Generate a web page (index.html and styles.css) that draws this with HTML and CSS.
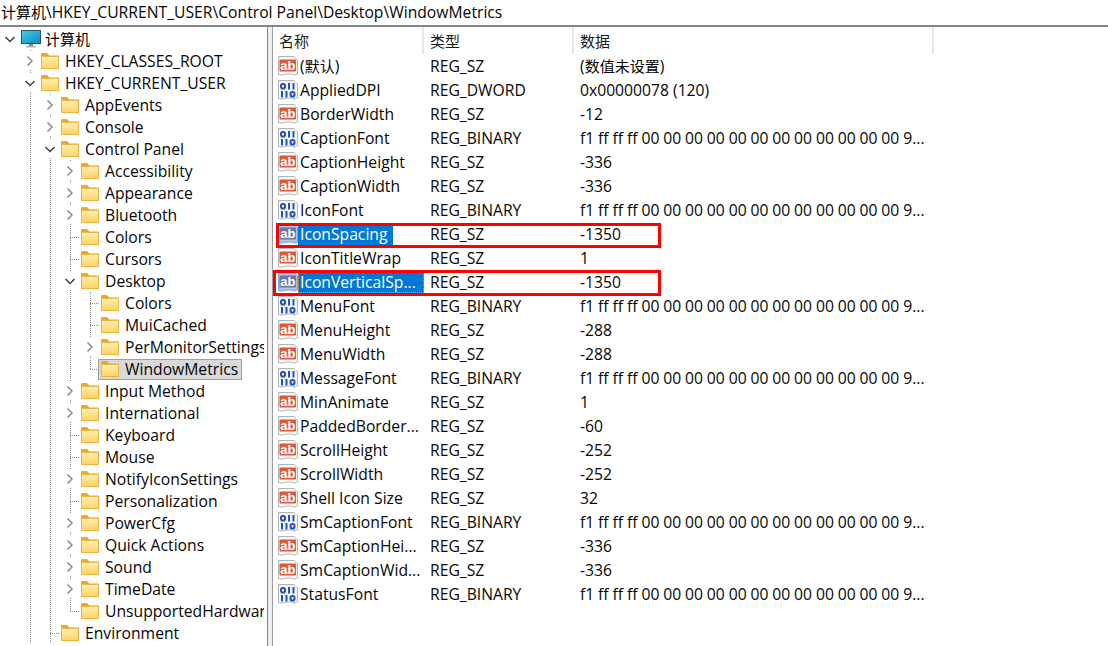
FILE: index.html
```html
<!DOCTYPE html>
<html lang="zh-CN">
<head>
<meta charset="utf-8">
<title>注册表编辑器</title>
<link rel="stylesheet" href="styles.css">
</head>
<body>
<svg class="defs" width="0" height="0" aria-hidden="true">
  <defs>
    <linearGradient id="fold" x1="0" y1="0" x2="0" y2="1">
      <stop offset="0" stop-color="#fff3bf"/><stop offset=".35" stop-color="#ffe594"/><stop offset="1" stop-color="#fbd36a"/>
    </linearGradient>
    <linearGradient id="screen" x1="0" y1="0" x2="1" y2="1">
      <stop offset="0" stop-color="#45cfe3"/><stop offset="1" stop-color="#0f86c4"/>
    </linearGradient>
  </defs>
  <symbol id="i-open" viewBox="0 0 20 18"><path d="M5.500 7 10 11.500 14.500 7" fill="none" stroke="#3f3f3f" stroke-width="1.500"/></symbol>
  <symbol id="i-closed" viewBox="0 0 20 18"><path d="M7.500 4.500 12 9 7.500 13.500" fill="none" stroke="#8c8c8c" stroke-width="1.500"/></symbol>
  <symbol id="i-folder" viewBox="0 0 18 16">
    <path d="M0 1q0-1 1-1h5l2.500 2.500H18v3H0z" fill="#f0a91f"/>
    <rect x=".5" y="3.500" width="17" height="12" fill="url(#fold)" stroke="#edb53f"/>
  </symbol>
  <symbol id="i-pc" viewBox="0 0 20 18">
    <rect x=".5" y=".5" width="19" height="13" fill="url(#screen)" stroke="#25566f"/>
    <path d="M8 14h4v2H8z" fill="#7d8b94"/>
    <path d="M5 16h10v1.500H5z" fill="#a9b3b9"/>
  </symbol>
  <symbol id="i-sz" viewBox="0 0 20 20">
    <path d="M.5.5H16l3.500 3.500V18q-2.500 1.500-5 .5t-5-.500-5 1-4-.5z" fill="var(--pg,#f6f7f8)" stroke="var(--pe,#b1b5ba)"/>
    <rect x="1.500" y="3.500" width="16.500" height="12" rx="1" fill="var(--ab,#e2583c)"/>
    <text class="ab" x="9.800" y="14" text-anchor="middle">ab</text>
  </symbol>
  <symbol id="i-bin" viewBox="0 0 20 20">
    <path d="M.5.5H16l3.500 3.500V18q-2.500 1.500-5 .5t-5-.500-5 1-4-.5z" fill="#f6f7f8" stroke="#b1b5ba"/>
    <g fill="none" stroke="#2450c4" stroke-width="2">
      <rect x="3" y="4" width="4" height="4.500" rx="1.800"/><path d="M11 3v6.500M15.500 3v6.500"/>
      <path d="M4 11v6.500M8.500 11v6.500"/><rect x="12.500" y="12" width="4" height="4.500" rx="1.800"/>
    </g>
  </symbol>
</svg>

<div class="pathbar"><span class="cjk">计算机</span>\HKEY_CURRENT_USER\Control Panel\Desktop\WindowMetrics</div>

<main class="panes">
  <nav class="tree">
    <div class="node"><span class="cell"><svg class="tw"><use href="#i-open"/></svg></span><svg class="pc"><use href="#i-pc"/></svg><span class="label cjk">计算机</span></div>
    <div class="node"><span class="cell"></span><span class="cell line"><svg class="tw"><use href="#i-closed"/></svg></span><svg class="fd"><use href="#i-folder"/></svg><span class="label">HKEY_CLASSES_ROOT</span></div>
    <div class="node"><span class="cell"></span><span class="cell line"><svg class="tw"><use href="#i-open"/></svg></span><svg class="fd"><use href="#i-folder"/></svg><span class="label">HKEY_CURRENT_USER</span></div>

    <div class="node"><span class="cell"></span><span class="cell line"></span><span class="cell line"><svg class="tw"><use href="#i-closed"/></svg></span><svg class="fd"><use href="#i-folder"/></svg><span class="label">AppEvents</span></div>
    <div class="node"><span class="cell"></span><span class="cell line"></span><span class="cell line"><svg class="tw"><use href="#i-closed"/></svg></span><svg class="fd"><use href="#i-folder"/></svg><span class="label">Console</span></div>
    <div class="node"><span class="cell"></span><span class="cell line"></span><span class="cell line"><svg class="tw"><use href="#i-open"/></svg></span><svg class="fd"><use href="#i-folder"/></svg><span class="label">Control Panel</span></div>

    <div class="node"><span class="cell"></span><span class="cell line"></span><span class="cell line"></span><span class="cell line"><svg class="tw"><use href="#i-closed"/></svg></span><svg class="fd"><use href="#i-folder"/></svg><span class="label">Accessibility</span></div>
    <div class="node"><span class="cell"></span><span class="cell line"></span><span class="cell line"></span><span class="cell line"><svg class="tw"><use href="#i-closed"/></svg></span><svg class="fd"><use href="#i-folder"/></svg><span class="label">Appearance</span></div>
    <div class="node"><span class="cell"></span><span class="cell line"></span><span class="cell line"></span><span class="cell line"><svg class="tw"><use href="#i-closed"/></svg></span><svg class="fd"><use href="#i-folder"/></svg><span class="label">Bluetooth</span></div>
    <div class="node"><span class="cell"></span><span class="cell line"></span><span class="cell line"></span><span class="cell leaf"></span><svg class="fd"><use href="#i-folder"/></svg><span class="label">Colors</span></div>
    <div class="node"><span class="cell"></span><span class="cell line"></span><span class="cell line"></span><span class="cell leaf"></span><svg class="fd"><use href="#i-folder"/></svg><span class="label">Cursors</span></div>
    <div class="node"><span class="cell"></span><span class="cell line"></span><span class="cell line"></span><span class="cell line"><svg class="tw"><use href="#i-open"/></svg></span><svg class="fd"><use href="#i-folder"/></svg><span class="label">Desktop</span></div>

    <div class="node"><span class="cell"></span><span class="cell line"></span><span class="cell line"></span><span class="cell line"></span><span class="cell leaf"></span><svg class="fd"><use href="#i-folder"/></svg><span class="label">Colors</span></div>
    <div class="node"><span class="cell"></span><span class="cell line"></span><span class="cell line"></span><span class="cell line"></span><span class="cell leaf"></span><svg class="fd"><use href="#i-folder"/></svg><span class="label">MuiCached</span></div>
    <div class="node"><span class="cell"></span><span class="cell line"></span><span class="cell line"></span><span class="cell line"></span><span class="cell line"><svg class="tw"><use href="#i-closed"/></svg></span><svg class="fd"><use href="#i-folder"/></svg><span class="label">PerMonitorSettings</span></div>
    <div class="node"><span class="cell"></span><span class="cell line"></span><span class="cell line"></span><span class="cell line"></span><span class="cell last"></span><div class="current"><svg class="fd"><use href="#i-folder"/></svg><span class="label">WindowMetrics</span></div></div>

    <div class="node"><span class="cell"></span><span class="cell line"></span><span class="cell line"></span><span class="cell line"><svg class="tw"><use href="#i-closed"/></svg></span><svg class="fd"><use href="#i-folder"/></svg><span class="label">Input Method</span></div>
    <div class="node"><span class="cell"></span><span class="cell line"></span><span class="cell line"></span><span class="cell line"><svg class="tw"><use href="#i-closed"/></svg></span><svg class="fd"><use href="#i-folder"/></svg><span class="label">International</span></div>
    <div class="node"><span class="cell"></span><span class="cell line"></span><span class="cell line"></span><span class="cell leaf"></span><svg class="fd"><use href="#i-folder"/></svg><span class="label">Keyboard</span></div>
    <div class="node"><span class="cell"></span><span class="cell line"></span><span class="cell line"></span><span class="cell leaf"></span><svg class="fd"><use href="#i-folder"/></svg><span class="label">Mouse</span></div>
    <div class="node"><span class="cell"></span><span class="cell line"></span><span class="cell line"></span><span class="cell line"><svg class="tw"><use href="#i-closed"/></svg></span><svg class="fd"><use href="#i-folder"/></svg><span class="label">NotifyIconSettings</span></div>
    <div class="node"><span class="cell"></span><span class="cell line"></span><span class="cell line"></span><span class="cell leaf"></span><svg class="fd"><use href="#i-folder"/></svg><span class="label">Personalization</span></div>
    <div class="node"><span class="cell"></span><span class="cell line"></span><span class="cell line"></span><span class="cell line"><svg class="tw"><use href="#i-closed"/></svg></span><svg class="fd"><use href="#i-folder"/></svg><span class="label">PowerCfg</span></div>
    <div class="node"><span class="cell"></span><span class="cell line"></span><span class="cell line"></span><span class="cell line"><svg class="tw"><use href="#i-closed"/></svg></span><svg class="fd"><use href="#i-folder"/></svg><span class="label">Quick Actions</span></div>
    <div class="node"><span class="cell"></span><span class="cell line"></span><span class="cell line"></span><span class="cell line"><svg class="tw"><use href="#i-closed"/></svg></span><svg class="fd"><use href="#i-folder"/></svg><span class="label">Sound</span></div>
    <div class="node"><span class="cell"></span><span class="cell line"></span><span class="cell line"></span><span class="cell line"><svg class="tw"><use href="#i-closed"/></svg></span><svg class="fd"><use href="#i-folder"/></svg><span class="label">TimeDate</span></div>
    <div class="node"><span class="cell"></span><span class="cell line"></span><span class="cell line"></span><span class="cell last"></span><svg class="fd"><use href="#i-folder"/></svg><span class="label">UnsupportedHardware</span></div>
    <div class="node"><span class="cell"></span><span class="cell line"></span><span class="cell leaf"></span><svg class="fd"><use href="#i-folder"/></svg><span class="label">Environment</span></div>
  </nav>

  <div class="gutter"></div>

  <section class="values">
    <div class="heads">
      <div class="head name cjk">名称</div>
      <div class="head type cjk">类型</div>
      <div class="head data cjk">数据</div>
    </div>
    <div class="row"><svg class="ic"><use href="#i-sz"/></svg><span class="nm">(<span class="cjk">默认</span>)</span><span>REG_SZ</span><span>(<span class="cjk">数值未设置</span>)</span></div>
    <div class="row"><svg class="ic"><use href="#i-bin"/></svg><span class="nm">AppliedDPI</span><span>REG_DWORD</span><span>0x00000078 (120)</span></div>
    <div class="row"><svg class="ic"><use href="#i-sz"/></svg><span class="nm">BorderWidth</span><span>REG_SZ</span><span>-12</span></div>
    <div class="row"><svg class="ic"><use href="#i-bin"/></svg><span class="nm">CaptionFont</span><span>REG_BINARY</span><span class="hex">f1 ff ff ff 00 00 00 00 00 00 00 00 00 00 00 00 9...</span></div>
    <div class="row"><svg class="ic"><use href="#i-sz"/></svg><span class="nm">CaptionHeight</span><span>REG_SZ</span><span>-336</span></div>
    <div class="row"><svg class="ic"><use href="#i-sz"/></svg><span class="nm">CaptionWidth</span><span>REG_SZ</span><span>-336</span></div>
    <div class="row"><svg class="ic"><use href="#i-bin"/></svg><span class="nm">IconFont</span><span>REG_BINARY</span><span class="hex">f1 ff ff ff 00 00 00 00 00 00 00 00 00 00 00 00 9...</span></div>
    <div class="row picked"><svg class="ic"><use href="#i-sz"/></svg><span class="nm">IconSpacing</span><span>REG_SZ</span><span>-1350</span></div>
    <div class="row"><svg class="ic"><use href="#i-sz"/></svg><span class="nm">IconTitleWrap</span><span>REG_SZ</span><span>1</span></div>
    <div class="row picked focus"><svg class="ic"><use href="#i-sz"/></svg><span class="nm">IconVerticalSp...</span><span>REG_SZ</span><span>-1350</span></div>
    <div class="row"><svg class="ic"><use href="#i-bin"/></svg><span class="nm">MenuFont</span><span>REG_BINARY</span><span class="hex">f1 ff ff ff 00 00 00 00 00 00 00 00 00 00 00 00 9...</span></div>
    <div class="row"><svg class="ic"><use href="#i-sz"/></svg><span class="nm">MenuHeight</span><span>REG_SZ</span><span>-288</span></div>
    <div class="row"><svg class="ic"><use href="#i-sz"/></svg><span class="nm">MenuWidth</span><span>REG_SZ</span><span>-288</span></div>
    <div class="row"><svg class="ic"><use href="#i-bin"/></svg><span class="nm">MessageFont</span><span>REG_BINARY</span><span class="hex">f1 ff ff ff 00 00 00 00 00 00 00 00 00 00 00 00 9...</span></div>
    <div class="row"><svg class="ic"><use href="#i-sz"/></svg><span class="nm">MinAnimate</span><span>REG_SZ</span><span>1</span></div>
    <div class="row"><svg class="ic"><use href="#i-sz"/></svg><span class="nm">PaddedBorder...</span><span>REG_SZ</span><span>-60</span></div>
    <div class="row"><svg class="ic"><use href="#i-sz"/></svg><span class="nm">ScrollHeight</span><span>REG_SZ</span><span>-252</span></div>
    <div class="row"><svg class="ic"><use href="#i-sz"/></svg><span class="nm">ScrollWidth</span><span>REG_SZ</span><span>-252</span></div>
    <div class="row"><svg class="ic"><use href="#i-sz"/></svg><span class="nm">Shell Icon Size</span><span>REG_SZ</span><span>32</span></div>
    <div class="row"><svg class="ic"><use href="#i-bin"/></svg><span class="nm">SmCaptionFont</span><span>REG_BINARY</span><span class="hex">f1 ff ff ff 00 00 00 00 00 00 00 00 00 00 00 00 9...</span></div>
    <div class="row"><svg class="ic"><use href="#i-sz"/></svg><span class="nm">SmCaptionHei...</span><span>REG_SZ</span><span>-336</span></div>
    <div class="row"><svg class="ic"><use href="#i-sz"/></svg><span class="nm">SmCaptionWid...</span><span>REG_SZ</span><span>-336</span></div>
    <div class="row"><svg class="ic"><use href="#i-bin"/></svg><span class="nm">StatusFont</span><span>REG_BINARY</span><span class="hex">f1 ff ff ff 00 00 00 00 00 00 00 00 00 00 00 00 9...</span></div>
    <div class="mark mark-a"></div>
    <div class="mark mark-b"></div>
  </section>
</main>
</body>
</html>
```

FILE: styles.css
```css
* { box-sizing: border-box; }
html, body { margin: 0; height: 100%; overflow: hidden; background: #fff; }
body {
  font-family: "Open Sans", "Noto Sans CJK SC", sans-serif;
  font-size: 15.7px;
  line-height: 20px;
  color: #060606;
  display: flex;
  flex-direction: column;
}
.defs { position: absolute; }
.cjk { font-family: "Noto Sans CJK SC", sans-serif; font-size: 15px; }
.ab { font: bold 13px "Liberation Sans", sans-serif; fill: #fff; }

.pathbar {
  height: 27px;
  flex: none;
  padding: 2px 0 0 1px;
  line-height: 20px;
  border-bottom: 2px solid #82868a;
  white-space: nowrap;
}

.panes { flex: 1; display: flex; min-height: 0; }

.tree { width: 264px; margin-right: 3px; flex: none; padding-top: 1px; overflow: hidden; }
.node { display: flex; align-items: center; height: 22px; white-space: nowrap; }
.cell { flex: none; width: 20px; height: 22px; display: flex; align-items: center; }
.line {
  background: repeating-linear-gradient(#8a8a8a 0 1px, transparent 1px 2px) 10px 0 / 1px 100% no-repeat;
}
.leaf {
  background:
    repeating-linear-gradient(#8a8a8a 0 1px, transparent 1px 2px) 10px 0 / 1px 100% no-repeat,
    repeating-linear-gradient(90deg, #8a8a8a 0 1px, transparent 1px 2px) 10px 11px / 10px 1px no-repeat;
}
.last {
  background:
    repeating-linear-gradient(#8a8a8a 0 1px, transparent 1px 2px) 10px 0 / 1px 12px no-repeat,
    repeating-linear-gradient(90deg, #8a8a8a 0 1px, transparent 1px 2px) 10px 11px / 10px 1px no-repeat;
}
.tw { width: 20px; height: 18px; background: #fff; }
.fd { width: 18px; height: 16px; flex: none; margin-left: 1px; }
.pc { width: 20px; height: 18px; flex: none; margin-left: 1px; }
.label { margin-left: 6px; }
.pc + .label { margin-left: 4px; }
.current {
  display: flex;
  align-items: center;
  height: 21px;
  margin-left: -2px;
  padding: 0 3px 0 1px;
  background: #d9d9d9;
  border: 1px solid #a0a0a0;
}

.gutter {
  width: 6px;
  flex: none;
  background: #f0f0f0;
  border-left: 1px solid #7f8387;
  border-right: 1px solid #9a9da0;
}

.values { flex: 1; position: relative; min-width: 0; }
.heads { display: flex; height: 27px; }
.head {
  padding: 4px 0 0 6px;
  color: #1a1a1a;
  border-right: 2px solid #e6e6e6;
  height: 27px;
}
.name { width: 151px; }
.type { width: 150px; }
.data { width: 360px; }

.row {
  display: grid;
  grid-template-columns: 27px 130px 150px 1fr;
  align-items: center;
  height: 24px;
  white-space: nowrap;
}
.hex { word-spacing: -0.2px; }
.ic { width: 20px; height: 20px; margin-left: 5px; }
.picked { --pg: #a9c4e4; --pe: #7fa3cf; --ab: #6d75a3; }
.picked .nm {
  background: #0078d7;
  color: #fff;
  margin-left: -2px;
  padding: 1px 6px 1px 2px;
  height: 22px;
  justify-self: start;
}
.focus .nm { width: 126px; padding-right: 0; outline: 1px dotted #e0a050; outline-offset: -1px; }

.mark { position: absolute; border: 3px solid #ff0000; pointer-events: none; }
.mark-a { left: 3px; top: 196px; width: 385px; height: 25px; }
.mark-b { left: 0; top: 243px; width: 388px; height: 26px; }
```
